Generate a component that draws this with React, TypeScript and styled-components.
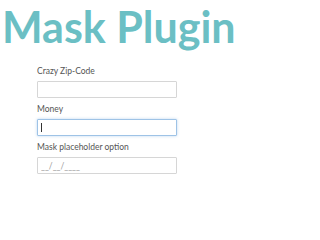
import styled, { createGlobalStyle } from "styled-components";

const GlobalStyle = createGlobalStyle`
  body {
    margin: 0;
    background: #ffffff;
    font-family: Lato, "Open Sans", sans-serif;
  }
`;

const Page = styled.div`
  width: 239px;
  height: 211px;
  overflow: hidden;
`;

const Title = styled.h1`
  margin: 0;
  padding: 1px 0 0 2px;
  font-family: Lato, sans-serif;
  font-weight: 700;
  font-size: 43px;
  line-height: 51px;
  color: #6bbfc4;
  white-space: nowrap;
`;

const Form = styled.form`
  display: flex;
  flex-direction: column;
  gap: 5px;
  padding: 13px 0 0 37px;
  width: 140px;
`;

const Field = styled.div`
  display: flex;
  flex-direction: column;
  gap: 4px;
`;

const Label = styled.label`
  font-size: 8.5px;
  line-height: 12px;
  color: #555555;
`;

const InputWrap = styled.div`
  position: relative;
`;

const Input = styled.input<{ $focused?: boolean }>`
  box-sizing: border-box;
  display: block;
  width: 140px;
  height: 17px;
  margin: 0;
  padding: 0 3px;
  font-family: Lato, sans-serif;
  font-size: 8.5px;
  color: #444;
  background: #fff;
  border: 1px solid ${(p) => (p.$focused ? "#9ec3e6" : "#d6d6d6")};
  box-shadow: ${(p) => (p.$focused ? "0 0 3px rgba(102, 160, 220, 0.45)" : "none")};
  border-radius: 1px;
  outline: none;

  &::placeholder {
    color: #9a9a9a;
  }
`;

const Caret = styled.span`
  position: absolute;
  left: 4px;
  top: 4px;
  width: 1px;
  height: 9px;
  background: #333;
`;

export default function App() {
  return (
    <>
      <GlobalStyle />
      <Page>
        <Title>Mask Plugin</Title>
        <Form>
          <Field>
            <Label>Crazy Zip-Code</Label>
            <Input type="text" />
          </Field>
          <Field>
            <Label>Money</Label>
            <InputWrap>
              <Input type="text" $focused />
              <Caret />
            </InputWrap>
          </Field>
          <Field>
            <Label>Mask placeholder option</Label>
            <Input type="text" placeholder="__/__/____" />
          </Field>
        </Form>
      </Page>
    </>
  );
}
